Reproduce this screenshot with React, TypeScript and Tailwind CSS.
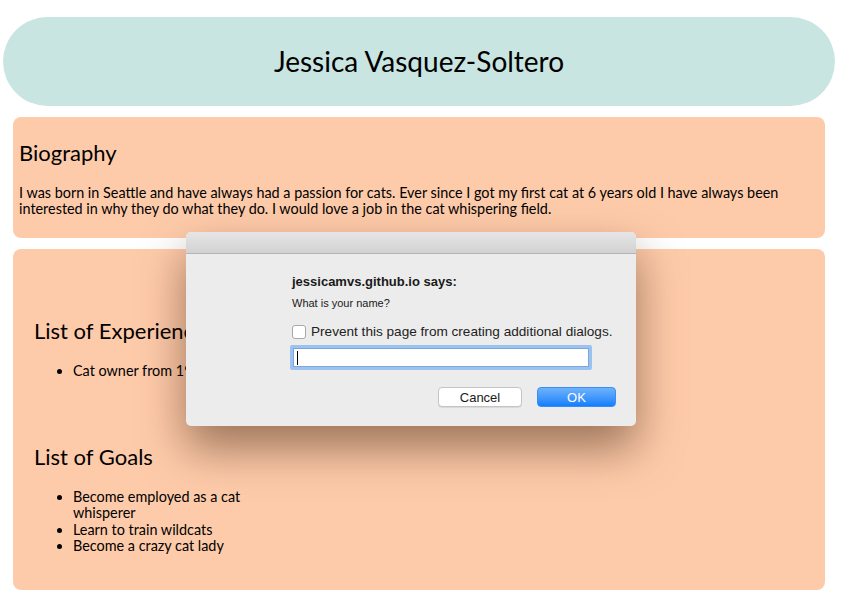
import React from 'react'

const pageFont = { fontFamily: 'Lato, "Liberation Sans", sans-serif' }

const experience = ['Cat owner from 1999 - present']
const goals = ['Become employed as a cat whisperer', 'Learn to train wildcats', 'Become a crazy cat lady']

const PromptDialog: React.FC = () => (
  <div
    className="absolute left-[186px] top-[232px] w-[450px] h-[194px] rounded-[5px] bg-[#ececec] shadow-[0_22px_45px_rgba(60,30,10,0.5)] overflow-hidden"
    style={{ fontFamily: '"Liberation Sans", Arial, sans-serif' }}
  >
    <div className="h-[22px] bg-gradient-to-b from-[#e6e6e6] to-[#d2d2d2] border-b border-[#b4b4b4]" />
    <div className="pl-[106px] pr-[20px] pt-[20px]">
      <div className="text-[13px] font-bold text-[#1a1a1a] leading-[15px]">jessicamvs.github.io says:</div>
      <div className="mt-[8px] text-[11px] text-[#1a1a1a] leading-[13px]">What is your name?</div>
      <label className="mt-[14px] flex items-center gap-[5px] text-[13.6px] text-[#222] leading-[15px] whitespace-nowrap">
        <span className="w-[14px] h-[14px] rounded-[3px] border border-[#a8a8a8] bg-white shrink-0" />
        Prevent this page from creating additional dialogs.
      </label>
      <div className="mt-[6px] w-[302px] h-[25px] rounded-[2px] border-[3px] border-[#9cc3ef] -ml-[2px]">
        <div className="h-full bg-white border border-[#7ea6d8] flex items-center pl-[3px]">
          <span className="w-px h-[14px] bg-black" />
        </div>
      </div>
      <div className="mt-[17px] flex justify-end gap-[15px]" style={{ width: 324 }}>
        <button className="w-[84px] h-[20px] rounded-[4px] bg-white border border-[#c4c4c4] shadow-[0_1px_0_rgba(0,0,0,0.08)] text-[13px] text-[#1a1a1a] leading-none">
          Cancel
        </button>
        <button className="w-[79px] h-[20px] rounded-[4px] bg-gradient-to-b from-[#6cb3fa] to-[#0f7efd] border border-[#3b8cf5] text-[13px] text-white leading-none">
          OK
        </button>
      </div>
    </div>
  </div>
)

export default function App() {
  return (
    <div className="relative min-h-[599px] bg-white text-black" style={pageFont}>
      <div className="pt-[17px] pl-[3px]">
        <header className="w-[832px] h-[89px] rounded-full bg-[#c9e5e1] flex items-center justify-center">
          <h1 className="text-[28px] leading-none -mt-[2px]">Jessica Vasquez-Soltero</h1>
        </header>
      </div>

      <section className="mt-[11px] ml-[13px] w-[812px] h-[121px] rounded-[8px] bg-[#fecbaa] px-[6px] pt-[22px]">
        <h2 className="text-[22px] leading-[28px]">Biography</h2>
        <p className="mt-[18px] text-[14.4px] leading-[16px]">
          I was born in Seattle and have always had a passion for cats. Ever since I got my first cat at 6 years old I
          have always been interested in why they do what they do. I would love a job in the cat whispering field.
        </p>
      </section>

      <section className="mt-[11px] ml-[13px] w-[812px] h-[341px] rounded-[8px] bg-[#fecbaa] px-[21px] pt-[68px]">
        <div className="w-[230px]">
          <h2 className="text-[22px] leading-[28px] whitespace-nowrap">List of Experience</h2>
          <ul className="mt-[18px] list-disc pl-[39px] text-[14.4px] leading-[16.5px]">
            {experience.map((item) => (
              <li key={item} className="whitespace-nowrap">{item}</li>
            ))}
          </ul>
          <h2 className="mt-[63px] text-[22px] leading-[28px]">List of Goals</h2>
          <ul className="mt-[18px] list-disc pl-[39px] text-[14.4px] leading-[16.5px]">
            {goals.map((item) => (
              <li key={item}>{item}</li>
            ))}
          </ul>
        </div>
      </section>

      <PromptDialog />
    </div>
  )
}
